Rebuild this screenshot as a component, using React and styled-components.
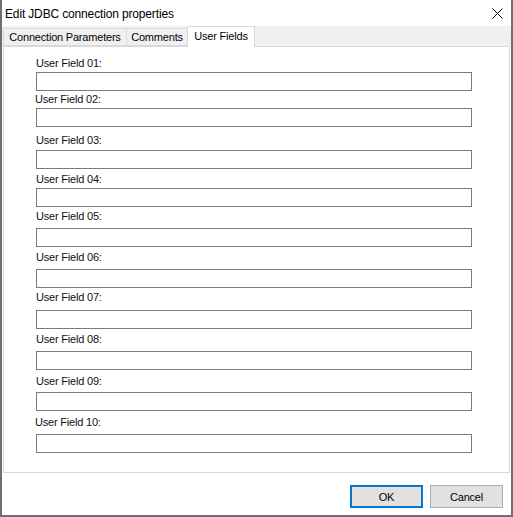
import styled, { createGlobalStyle } from 'styled-components';

const GlobalStyle = createGlobalStyle`
  html, body {
    margin: 0;
    padding: 0;
    background: #ffffff;
  }
`;

const Window = styled.div`
  box-sizing: border-box;
  width: 513px;
  height: 517px;
  display: flex;
  flex-direction: column;
  background: #ffffff;
  border: 2px solid #6f6f6f;
  border-top: none;
  font-family: "Liberation Sans", Arial, sans-serif;
  color: #000;
`;

const TitleBar = styled.div`
  height: 26px;
  flex: none;
  display: flex;
  align-items: center;
  justify-content: space-between;
  padding: 0 8px 0 3px;
`;

const Title = styled.span`
  font-size: 12px;
  letter-spacing: -0.15px;
  line-height: 14px;
  margin-top: 1px;
`;

const CloseButton = styled.span`
  display: flex;
  width: 11px;
  height: 11px;
  margin-top: 1px;
`;

const TabStrip = styled.div`
  height: 20px;
  flex: none;
  display: flex;
  align-items: flex-end;
  padding-left: 1px;
  background: #f0f0f0;
`;

const Tab = styled.div`
  box-sizing: border-box;
  width: ${p => p.width}px;
  height: ${p => (p.active ? 21 : 18)}px;
  margin-left: ${p => (p.first ? 0 : -1)}px;
  margin-bottom: ${p => (p.active ? -1 : 0)}px;
  position: relative;
  z-index: ${p => (p.active ? 1 : 0)};
  display: flex;
  align-items: center;
  justify-content: center;
  background: ${p => (p.active ? '#ffffff' : '#f0f0f0')};
  border: 1px solid #d9d9d9;
  border-bottom: ${p => (p.active ? 'none' : '1px solid #d9d9d9')};
  font-size: 11px;
  letter-spacing: -0.2px;
  padding-bottom: ${p => (p.active ? 2 : 0)}px;
  white-space: nowrap;
`;

const Panel = styled.div`
  box-sizing: border-box;
  height: 427px;
  flex: none;
  margin: 0 1px;
  border: 1px solid #d9d9d9;
  background: #ffffff;
  padding-left: 32px;
  display: flex;
  flex-direction: column;
`;

const FieldRow = styled.div`
  display: flex;
  flex-direction: column;
  margin-top: ${p => p.lead}px;
`;

const Label = styled.label`
  font-size: 11px;
  line-height: 13px;
  height: 13px;
  letter-spacing: -0.2px;
  color: #101018;
  margin-left: ${p => p.shift}px;
  margin-bottom: ${p => p.gap}px;
`;

const TextBox = styled.input`
  box-sizing: border-box;
  width: 436px;
  height: 19px;
  margin: 0;
  padding: 0 3px;
  border: 1px solid #7a7a7a;
  background: #ffffff;
  outline: none;
  font-family: "Liberation Sans", Arial, sans-serif;
  font-size: 11px;
`;

const Footer = styled.div`
  flex: 1;
  display: flex;
  justify-content: flex-end;
  align-items: flex-start;
  gap: 7px;
  padding: 12px 8px 0 0;
`;

const Button = styled.button`
  box-sizing: border-box;
  width: 73px;
  height: 23px;
  margin: 0;
  padding: 0;
  background: #e1e1e1;
  border: ${p => (p.primary ? '2px solid #0078d7' : '1px solid #adadad')};
  font-family: "Liberation Sans", Arial, sans-serif;
  font-size: 11px;
  letter-spacing: -0.2px;
  color: #000;
`;

const fields = [
  { n: '01', lead: 10, gap: 2, shift: 0 },
  { n: '02', lead: 2, gap: 2, shift: -1 },
  { n: '03', lead: 7, gap: 3, shift: 0 },
  { n: '04', lead: 4, gap: 2, shift: 0 },
  { n: '05', lead: 3, gap: 5, shift: 0 },
  { n: '06', lead: 4, gap: 5, shift: 0 },
  { n: '07', lead: 3, gap: 6, shift: 0 },
  { n: '08', lead: 4, gap: 5, shift: 0 },
  { n: '09', lead: 5, gap: 4, shift: 0 },
  { n: '10', lead: 5, gap: 5, shift: -1 },
];

const App = () => {
  return (
    <>
      <GlobalStyle />
      <Window>
        <TitleBar>
          <Title>Edit JDBC connection properties</Title>
          <CloseButton>
            <svg width="11" height="11" viewBox="0 0 11 11">
              <path d="M0.5 0.5 L10.5 10.5 M10.5 0.5 L0.5 10.5" stroke="#000" strokeWidth="1" fill="none" />
            </svg>
          </CloseButton>
        </TitleBar>
        <TabStrip>
          <Tab first width={124}>Connection Parameters</Tab>
          <Tab width={62}>Comments</Tab>
          <Tab active width={68}>User Fields</Tab>
        </TabStrip>
        <Panel>
          {fields.map(f => (
            <FieldRow key={f.n} lead={f.lead}>
              <Label shift={f.shift} gap={f.gap}>User Field {f.n}:</Label>
              <TextBox type="text" />
            </FieldRow>
          ))}
        </Panel>
        <Footer>
          <Button primary>OK</Button>
          <Button>Cancel</Button>
        </Footer>
      </Window>
    </>
  );
};

export default App;
